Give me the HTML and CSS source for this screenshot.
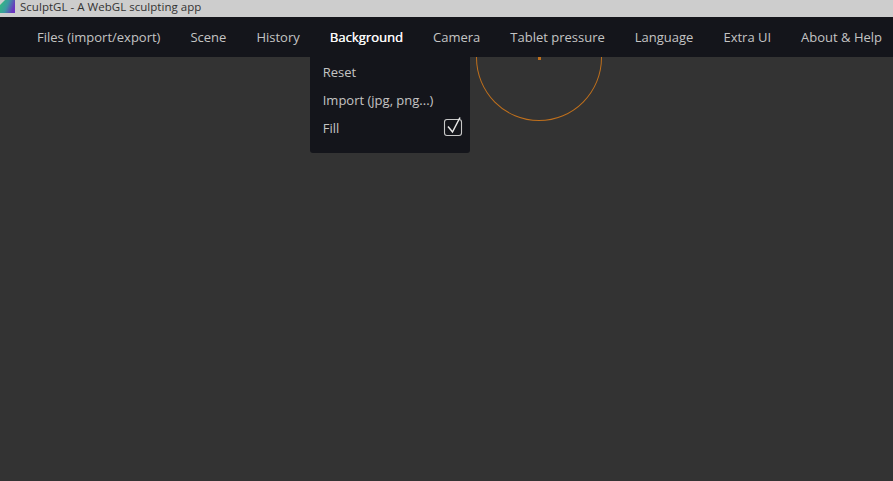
FILE: index.html
```html
<!DOCTYPE html>
<html lang="en">
<head>
<meta charset="utf-8">
<title>SculptGL - A WebGL sculpting app</title>
<link rel="stylesheet" href="styles.css">
</head>
<body>
<header class="titlebar">
  <svg class="app-icon" width="16" height="13" viewBox="0 0 16 13">
    <defs>
      <linearGradient id="g" x1="0" y1="0" x2="1" y2="0.35">
        <stop offset="0" stop-color="#2fc07a"/>
        <stop offset="0.55" stop-color="#3c9aa0"/>
        <stop offset="1" stop-color="#6a35c0"/>
      </linearGradient>
    </defs>
    <polygon points="5,0 15,0 15,13 0,13 0,5" fill="url(#g)"/>
  </svg>
  <span class="title-text">SculptGL - A WebGL sculpting app</span>
</header>
<nav class="menubar">
  <span class="menu-item">Files (import/export)</span>
  <span class="menu-item">Scene</span>
  <span class="menu-item">History</span>
  <div class="menu-item active">Background
    <div class="dropdown">
      <div class="drop-row">Reset</div>
      <div class="drop-row">Import (jpg, png...)</div>
      <div class="drop-row">Fill
        <svg class="check" width="20" height="22" viewBox="0 0 20 22">
          <rect x="1.5" y="4.5" width="17" height="16" rx="2.5" fill="none" stroke="#c8c8c8" stroke-width="1.1"/>
          <path d="M5 11.5 L9.5 17 L17 2.5" fill="none" stroke="#e8e8e8" stroke-width="1.5"/>
        </svg>
      </div>
    </div>
  </div>
  <span class="menu-item">Camera</span>
  <span class="menu-item">Tablet pressure</span>
  <span class="menu-item">Language</span>
  <span class="menu-item">Extra UI</span>
  <span class="menu-item">About &amp; Help</span>
</nav>
<main class="canvas">
  <div class="cursor"></div>
  <div class="cursor-dot"></div>
</main>
</body>
</html>
```
FILE: styles.css
```css
* { box-sizing: border-box; }
html, body { margin: 0; height: 100%; overflow: hidden; }
body {
  width: 893px;
  height: 481px;
  display: flex;
  flex-direction: column;
  background: #333333;
  font-family: "Open Sans", sans-serif;
}
.titlebar {
  height: 17px;
  background: #cdcdcd;
  display: flex;
  align-items: flex-start;
  flex: none;
}
.app-icon { display: block; flex: none; }
.title-text {
  margin-left: 4px;
  font-family: "Open Sans", sans-serif;
  font-size: 11.5px;
  line-height: 13px;
  letter-spacing: 0.03px;
  color: #333;
}
.menubar {
  height: 40px;
  flex: none;
  background: #14151b;
  display: flex;
  align-items: center;
  padding-left: 37px;
  gap: 30px;
  position: relative;
  z-index: 2;
}
.menu-item {
  font-size: 13px;
  line-height: 40px;
  color: #c4c4c4;
  white-space: nowrap;
  position: relative;
}
.menu-item.active { color: #f8f8f8; text-shadow: 0.3px 0 0 #f8f8f8; letter-spacing: 0.05px; }
.dropdown {
  position: absolute;
  top: 40px;
  left: -20px;
  width: 160px;
  height: 96px;
  background: #14151b;
  border-radius: 0 0 3px 3px;
  padding-top: 1px;
  color: #c4c4c4;
  text-shadow: none;
  letter-spacing: 0;
}
.drop-row {
  height: 28px;
  line-height: 28px;
  padding-left: 13px;
  position: relative;
}
.check { position: absolute; left: 133px; top: 1px; }
.canvas { flex: 1; position: relative; overflow: hidden; }
.cursor {
  position: absolute;
  left: 476px;
  top: -63px;
  width: 126px;
  height: 127px;
  border: 1px solid #c0701c;
  border-radius: 50%;
}
.cursor-dot {
  position: absolute;
  left: 537.5px;
  top: 0;
  width: 3px;
  height: 3px;
  background: #c0701c;
}
```
